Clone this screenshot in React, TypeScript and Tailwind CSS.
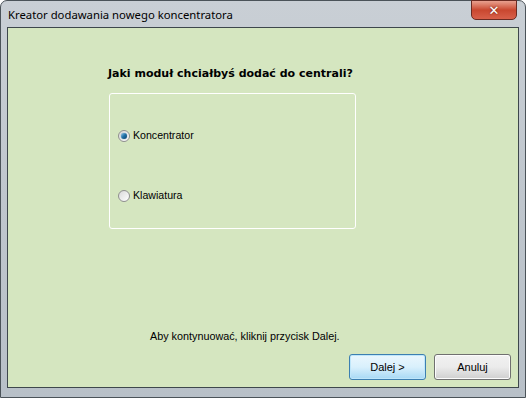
import React from "react";

function Radio({ checked }: { checked?: boolean }) {
  return (
    <span className="relative inline-flex items-center justify-center w-[12px] h-[12px] rounded-full border border-[#8f8f8f] bg-gradient-to-br from-[#d9d9d9] to-[#ffffff]">
      {checked && (
        <span className="w-[6px] h-[6px] rounded-full bg-gradient-to-br from-[#8ac7ea] via-[#1f6fa5] to-[#0c3f6b] shadow-[0_0_1px_#1b4f7a]" />
      )}
    </span>
  );
}

export default function App() {
  return (
    <div className="w-[526px] h-[398px] bg-white">
      <div
        className="relative w-[526px] h-[398px] rounded-t-[7px] border border-[#4b5359] bg-gradient-to-b from-[#c9cfd5] via-[#bfc6cd] to-[#b8c0c8] flex flex-col"
        style={{ fontFamily: '"Liberation Sans", Arial, sans-serif' }}
      >
        <div className="h-[26px] flex items-center pl-[7px] pt-[2px] shrink-0">
          <span
            className="text-[11.3px] text-black"
            style={{ fontFamily: '"Noto Sans", "Liberation Sans", sans-serif' }}
          >
            Kreator dodawania nowego koncentratora
          </span>
        </div>
        <div className="absolute top-[-1px] right-[8px] w-[46px] h-[20px] rounded-b-[5px] border border-[#6b2b22] bg-gradient-to-b from-[#e8a08f] via-[#c9472f] to-[#d8604a] flex items-center justify-center">
          <span className="text-white font-bold text-[13px] leading-none" style={{ fontFamily: '"DejaVu Sans", sans-serif', textShadow: "0 0 2px #5a1a10" }}>✕</span>
        </div>
        <div className="ml-[6px] mr-[6px] h-[361px] border border-[#3e474c] bg-[#d5e6c0] relative flex flex-col">
          <div className="pl-[100px] pt-[38px] font-bold text-black" style={{ fontFamily: '"DejaVu Sans", sans-serif', fontSize: "11px" }}>
            Jaki moduł chciałbyś dodać do centrali?
          </div>
          <div className="ml-[101px] mt-[10px] w-[247px] h-[136px] border border-white rounded-[3px] flex flex-col pl-[8px] pt-[36px] gap-[47px]">
            <label className="flex items-center gap-[3px] text-[10.6px] text-black h-[13px]">
              <Radio checked />
              <span>Koncentrator</span>
            </label>
            <label className="flex items-center gap-[3px] text-[10.6px] text-black h-[13px]">
              <Radio />
              <span>Klawiatura</span>
            </label>
          </div>
          <div className="pl-[142px] mt-[99px] text-[10.8px] text-black">
            Aby kontynuować, kliknij przycisk Dalej.
          </div>
          <div className="mt-auto flex justify-end gap-[8px] pr-[7px] pb-[7px]">
            <button className="w-[77px] h-[26px] rounded-[3px] border border-[#3c7fb1] bg-gradient-to-b from-[#eaf6fd] via-[#d9f0fc] to-[#a7d9f5] shadow-[inset_0_0_0_1px_#bfe6fa] text-[11px] text-black">
              Dalej &gt;
            </button>
            <button className="w-[77px] h-[26px] rounded-[3px] border border-[#707070] bg-gradient-to-b from-[#f2f2f2] via-[#ebebeb] to-[#cfcfcf] shadow-[inset_0_0_0_1px_#fcfcfc] text-[11px] text-black">
              Anuluj
            </button>
          </div>
        </div>
      </div>
    </div>
  );
}
